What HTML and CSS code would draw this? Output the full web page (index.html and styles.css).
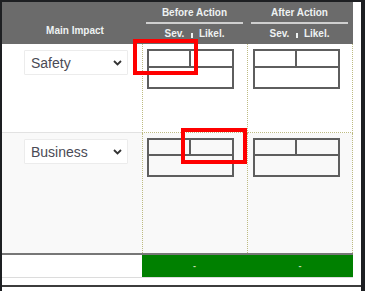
FILE: index.html
```html
<!DOCTYPE html>
<html lang="en">
<head>
    <meta charset="UTF-8">
    <meta name="viewport" content="width=device-width, initial-scale=1.0">
    <title>Risk Rating</title>
    <link rel="stylesheet" href="styles.css">
</head>
<body>

    <div class="frame">
        <div class="panel">

            <!-- header -->
            <div class="head">
                <div class="head-impact">Main Impact</div>
                <div class="head-group">
                    <div class="head-title">Before Action</div>
                    <div class="head-sub">Sev.<span class="sep"></span>Likel.</div>
                </div>
                <div class="head-group last">
                    <div class="head-title">After Action</div>
                    <div class="head-sub">Sev.<span class="sep"></span>Likel.</div>
                </div>
            </div>

            <!-- rows -->
            <div class="row">
                <div class="cell impact">
                    <div class="select-wrap">
                        <select class="impact-select">
                            <option>Safety</option>
                            <option>Business</option>
                        </select>
                        <svg class="chev" width="9" height="6" viewBox="0 0 9 6"><path d="M1 1 L4.5 4.5 L8 1" fill="none" stroke="#333" stroke-width="1.8"/></svg>
                    </div>
                </div>
                <div class="cell rating">
                    <div class="mini">
                        <div class="mini-top"><span></span><span></span></div>
                    </div>
                </div>
                <div class="cell rating last">
                    <div class="mini">
                        <div class="mini-top"><span></span><span></span></div>
                    </div>
                </div>
            </div>

            <div class="row alt">
                <div class="cell impact">
                    <div class="select-wrap">
                        <select class="impact-select">
                            <option>Business</option>
                            <option>Safety</option>
                        </select>
                        <svg class="chev" width="9" height="6" viewBox="0 0 9 6"><path d="M1 1 L4.5 4.5 L8 1" fill="none" stroke="#333" stroke-width="1.8"/></svg>
                    </div>
                </div>
                <div class="cell rating">
                    <div class="mini">
                        <div class="mini-top"><span></span><span></span></div>
                    </div>
                </div>
                <div class="cell rating last">
                    <div class="mini">
                        <div class="mini-top"><span></span><span></span></div>
                    </div>
                </div>
            </div>

            <!-- totals -->
            <div class="foot">
                <div class="foot-cell"></div>
                <div class="foot-cell score">-</div>
                <div class="foot-cell score">-</div>
            </div>
        </div>

        <div class="bottom-line"></div>

        <!-- annotation marks -->
        <div class="mark mark-1"></div>
        <div class="mark mark-2"></div>
    </div>

</body>
</html>
```

FILE: styles.css
```css
body {
    margin: 0;
    font-family: 'Liberation Sans', Arial, sans-serif;
    background: #fff;
}
.frame {
    position: relative;
    width: 365px;
    height: 291px;
    box-sizing: border-box;
    border-left: 2px solid #1d1f22;
    border-top: 2px solid #1d1f22;
    border-right: 4px solid #1d1f22;
    background: #fff;
    overflow: hidden;
}
.panel {
    width: 351px;
}
.head {
    display: grid;
    grid-template-columns: 140px 105px 106px;
    height: 42px;
    background: #6b6b6b;
    color: #eef2f2;
    font-size: 10px;
    font-weight: bold;
}
.head-impact {
    align-self: end;
    padding: 0 0 6px 6px;
    text-align: center;
    line-height: 14px;
}
.head-group {
    display: flex;
    flex-direction: column;
    text-align: center;
    padding: 0 4px;
}
.head-group.last {
    padding: 0 5px 0 4px;
}
.head-title {
    padding-top: 3px;
    line-height: 15px;
    height: 15px;
    padding-bottom: 2px;
    border-bottom: 2px solid #cfcfcf;
}
.head-sub {
    padding-top: 3px;
    line-height: 14px;
}
.sep {
    display: inline-block;
    width: 1.5px;
    height: 5px;
    background: #eef2f2;
    margin: 0 6px 0 7px;
    vertical-align: -1px;
}
.row {
    display: grid;
    grid-template-columns: 140px 105px 106px;
    height: 89px;
    background: #fff;
}
.row.alt {
    height: 120px;
    background: #f9f9f9;
}
.cell {
    box-sizing: border-box;
}
.row:first-of-type .cell.impact,
.row .cell.impact {
    border-bottom: 1px solid #e2e2e2;
}
.row.alt .cell.impact {
    border-bottom: none;
}
.cell.impact {
    padding: 6px 0 0 22px;
}
.cell.rating {
    border-left: 1px dotted #bdbb82;
    border-bottom: 1px dotted #bdbb82;
    padding: 5px 0 0 4px;
}
.row.alt .cell.rating {
    border-bottom: none;
}
.cell.rating.last {
    border-right: 1px dotted #bdbb82;
    padding-left: 5px;
}
.select-wrap {
    position: relative;
    width: 104px;
    height: 25px;
}
.impact-select {
    appearance: none;
    -webkit-appearance: none;
    width: 104px;
    height: 25px;
    box-sizing: border-box;
    border: 1px solid #ececec;
    border-radius: 1px;
    background: #fff;
    color: #4a4a55;
    font-family: 'Liberation Sans', Arial, sans-serif;
    font-size: 14px;
    padding: 0 0 0 6px;
    outline: none;
}
.chev {
    position: absolute;
    right: 6px;
    top: 10px;
}
.mini {
    width: 87px;
    height: 40px;
    box-sizing: border-box;
    border: 2px solid #5e5e5e;
    background: transparent;
}
.row.alt .mini {
    height: 39px;
}
.mini-top {
    display: flex;
    height: 15px;
    border-bottom: 2px solid #5e5e5e;
}
.row.alt .mini-top {
    height: 14px;
}
.mini-top span {
    flex: 1;
}
.mini-top span:first-child {
    flex: 0 0 40px;
    border-right: 2px solid #5e5e5e;
}
.foot {
    display: grid;
    grid-template-columns: 140px 211px;
    grid-template-columns: 140px 105px 106px;
    height: 22px;
    border-top: 2px solid #777;
    border-bottom: 1px solid #dcdcdc;
}
.foot-cell {
    text-align: center;
    line-height: 22px;
    font-size: 9px;
    font-weight: bold;
    color: #c6dcae;
}
.foot-cell.score {
    background: #008000;
}
.bottom-line {
    margin-top: 7px;
    width: 359px;
    height: 2px;
    background: #3c3c3c;
}
.mark {
    position: absolute;
    border: 4px solid #ff0000;
    box-sizing: border-box;
}
.mark-1 {
    left: 131px;
    top: 37px;
    width: 65px;
    height: 36px;
}
.mark-2 {
    left: 179px;
    top: 126px;
    width: 66px;
    height: 36px;
}
```
